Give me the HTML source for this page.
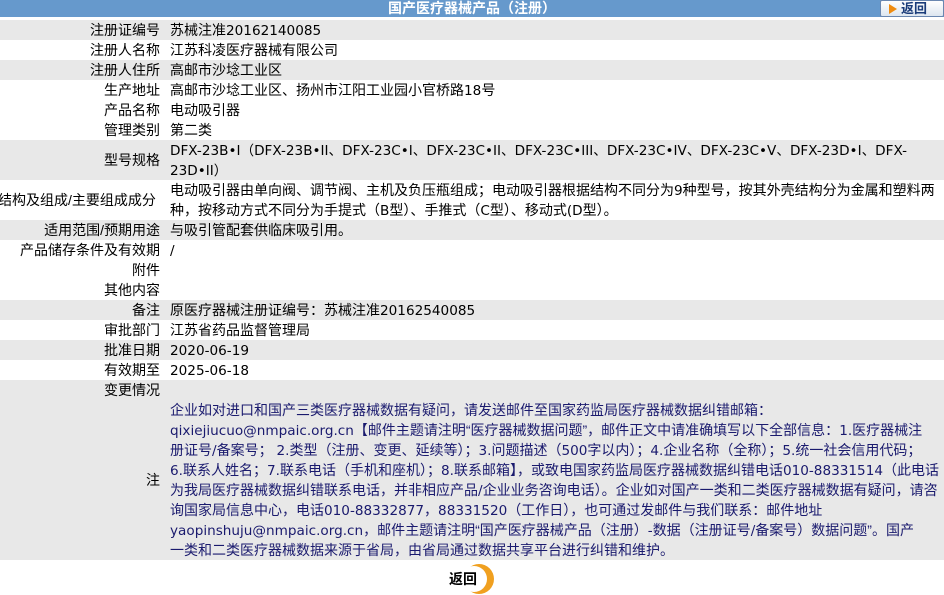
<!DOCTYPE html>
<html><head><meta charset="utf-8"><style>
body{margin:0;width:944px;height:594px;overflow:hidden;background:#fff;font-family:"Liberation Sans","Noto Sans CJK SC",sans-serif;font-size:14px;color:#000}
.e{font-family:"DejaVu Sans","Noto Sans CJK SC",sans-serif;font-size:13.6px;line-height:1px}
.hd{height:17px;background:#6699cc;color:#fff;font-weight:bold;text-align:center;line-height:16px;font-size:14px;position:relative;border-bottom:1px solid #fff}
.bk{position:absolute;right:0;top:0;width:62px;height:15px;background:linear-gradient(#fff,#dde6f0);border:1px solid #6a87b0;border-radius:2px;color:#1a3c7a;font-size:13px;line-height:15px;text-align:left}
.bk i{display:inline-block;width:0;height:0;border-left:8px solid #f08c10;border-top:5px solid transparent;border-bottom:5px solid transparent;margin:0 4px 0 8px;vertical-align:-1px}
.r{display:flex;line-height:20px;height:20px;overflow:hidden}
.r.t{height:40px}
.r.g{background:#e8e8e8}
.l{width:160px;text-align:right;flex:none;white-space:nowrap;display:flex;align-items:center;justify-content:flex-end}
.v{padding-left:10px;flex:1;padding-right:4px;white-space:nowrap;overflow:hidden}
.n{color:#1a1a6e}
</style></head><body>
<div class="hd">国产医疗器械产品（注册）<div class="bk"><i></i>返回</div></div>
<div class="r g" style="margin-top:2px"><div class="l">注册证编号</div><div class="v">苏械注准<span class="e">20162140085</span></div></div>
<div class="r"><div class="l">注册人名称</div><div class="v">江苏科凌医疗器械有限公司</div></div>
<div class="r g"><div class="l">注册人住所</div><div class="v">高邮市沙埝工业区</div></div>
<div class="r"><div class="l">生产地址</div><div class="v">高邮市沙埝工业区、扬州市江阳工业园小官桥路<span class="e">18</span>号</div></div>
<div class="r"><div class="l">产品名称</div><div class="v">电动吸引器</div></div>
<div class="r"><div class="l">管理类别</div><div class="v">第二类</div></div>
<div class="r g t"><div class="l">型号规格</div><div class="v"><span class="e">DFX-23B•I（DFX-23B•II、DFX-23C•I、DFX-23C•II、DFX-23C•III、DFX-23C•IV、DFX-23C•V、DFX-23D•I、DFX-</span><br><span class="e">23D•II）</span></div></div>
<div class="r t"><div class="l" style="justify-content:flex-start;margin-left:-2px;width:162px">结构及组成/主要组成成分</div><div class="v">电动吸引器由单向阀、调节阀、主机及负压瓶组成；电动吸引器根据结构不同分为<span class="e">9</span>种型号，按其外壳结构分为金属和塑料两<br>种，按移动方式不同分为手提式（<span class="e">B</span>型）、手推式（<span class="e">C</span>型）、移动式<span class="e">(D</span>型）。</div></div>
<div class="r g"><div class="l">适用范围/预期用途</div><div class="v">与吸引管配套供临床吸引用。</div></div>
<div class="r"><div class="l">产品储存条件及有效期</div><div class="v"><span class="e">/</span></div></div>
<div class="r"><div class="l">附件</div><div class="v"></div></div>
<div class="r"><div class="l">其他内容</div><div class="v"></div></div>
<div class="r g"><div class="l">备注</div><div class="v">原医疗器械注册证编号：苏械注准<span class="e">20162540085</span></div></div>
<div class="r"><div class="l">审批部门</div><div class="v">江苏省药品监督管理局</div></div>
<div class="r g"><div class="l">批准日期</div><div class="v"><span class="e">2020-06-19</span></div></div>
<div class="r"><div class="l">有效期至</div><div class="v"><span class="e">2025-06-18</span></div></div>
<div class="r g"><div class="l">变更情况</div><div class="v"></div></div>
<div class="r g" style="height:160px"><div class="l">注</div><div class="v n">企业如对进口和国产三类医疗器械数据有疑问，请发送邮件至国家药监局医疗器械数据纠错邮箱：<br><span class="e">qixiejiucuo@nmpaic.org.cn</span>【邮件主题请注明“医疗器械数据问题”，邮件正文中请准确填写以下全部信息：<span class="e">1.</span>医疗器械注<br>册证号<span class="e">/</span>备案号； <span class="e">2.</span>类型（注册、变更、延续等）；<span class="e">3.</span>问题描述（<span class="e">500</span>字以内）；<span class="e">4.</span>企业名称（全称）；<span class="e">5.</span>统一社会信用代码；<br><span class="e">6.</span>联系人姓名；<span class="e">7.</span>联系电话（手机和座机）；<span class="e">8.</span>联系邮箱】，或致电国家药监局医疗器械数据纠错电话<span class="e">010-88331514</span>（此电话<br>为我局医疗器械数据纠错联系电话，并非相应产品<span class="e">/</span>企业业务咨询电话）。企业如对国产一类和二类医疗器械数据有疑问，请咨<br>询国家局信息中心，电话<span class="e">010-88332877</span>，<span class="e">88331520</span>（工作日），也可通过发邮件与我们联系：邮件地址<br><span class="e">yaopinshuju@nmpaic.org.cn</span>，邮件主题请注明“国产医疗器械产品（注册）<span class="e">-</span>数据（注册证号<span class="e">/</span>备案号）数据问题”。国产<br>一类和二类医疗器械数据来源于省局，由省局通过数据共享平台进行纠错和维护。</div></div>
<div style="position:relative;height:34px">
<svg style="position:absolute;left:460px;top:3px" width="38" height="32"><circle cx="19" cy="16" r="15" fill="#f0a020"/><circle cx="14" cy="16" r="13" fill="#fff"/></svg>
<div style="position:absolute;left:449px;top:9px;font-weight:bold;font-size:14px">返回</div>
</div>
</body></html>
